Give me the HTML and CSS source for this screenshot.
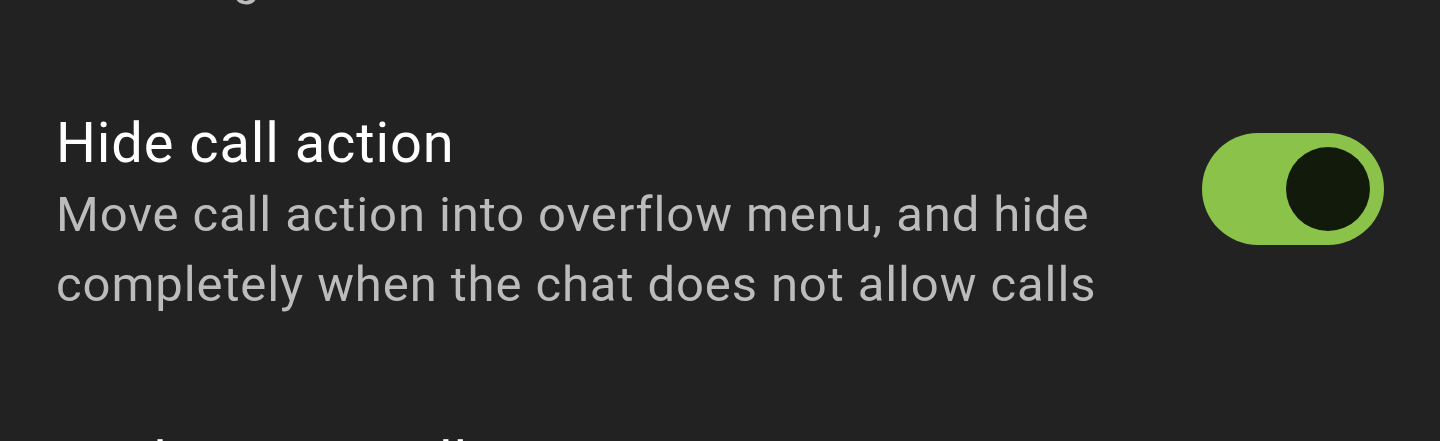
FILE: index.html
```html
<!DOCTYPE html>
<html lang="en">
<head>
<meta charset="utf-8">
<title>Settings</title>
<link rel="stylesheet" href="styles.css">
</head>
<body>
<div class="list">
  <div class="item item-prev">
    <div class="texts">
      <div class="summary">in settings</div>
    </div>
  </div>
  <div class="item">
    <div class="texts">
      <div class="title">Hide call action</div>
      <div class="summary">Move call action into overflow menu, and hide completely when the chat does not allow calls</div>
    </div>
    <div class="switch on" role="switch" aria-checked="true">
      <div class="thumb"></div>
    </div>
  </div>
  <div class="item">
    <div class="texts">
      <div class="title">Real name to all users</div>
    </div>
  </div>
</div>
</body>
</html>
```

FILE: styles.css
```css
html, body {
  margin: 0;
  padding: 0;
  background: #222222;
  overflow: hidden;
}
body {
  width: 1440px;
  height: 441px;
  font-family: Roboto, "Noto Sans", sans-serif;
}
.list {
  display: flex;
  flex-direction: column;
}
.item {
  display: flex;
  align-items: flex-start;
  padding: 52px 56px 57px 56px;
}
.item-prev {
  margin-top: -113px;
  padding-bottom: 45px;
}
.texts {
  flex: 1;
  min-width: 0;
  margin-right: 56px;
}
.title {
  color: #ffffff;
  font-size: 56px;
  line-height: 66px;
  letter-spacing: 0.9px;
}
.summary {
  color: #bcbcbc;
  font-size: 49px;
  line-height: 70px;
  letter-spacing: 0.9px;
  margin-top: 4px;
}
.item-prev .summary {
  letter-spacing: 0.4px;
}
.switch {
  flex: none;
  width: 182px;
  height: 112px;
  border-radius: 56px;
  background: #8bc34a;
  margin-top: 23px;
  display: flex;
  align-items: center;
  justify-content: flex-end;
  padding-right: 14px;
  box-sizing: border-box;
}
.thumb {
  width: 84px;
  height: 84px;
  border-radius: 50%;
  background: #121a0b;
}
```
